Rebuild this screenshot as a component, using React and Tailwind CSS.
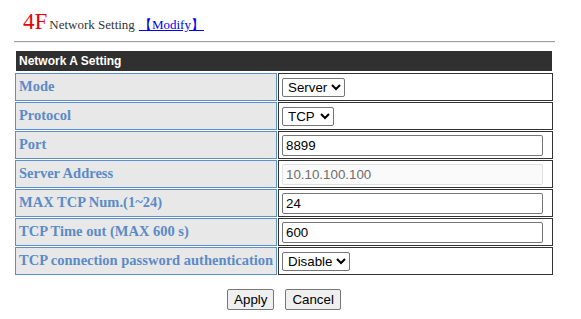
import React, { useState } from "react";

const rows = [
  { label: "Mode", type: "select", value: "Server", options: ["Server", "Client"] },
  { label: "Protocol", type: "select", value: "TCP", options: ["TCP", "UDP"] },
  { label: "Port", type: "input", value: "8899" },
  { label: "Server Address", type: "input", value: "10.10.100.100", disabled: true },
  { label: "MAX TCP Num.(1~24)", type: "input", value: "24" },
  { label: "TCP Time out (MAX 600 s)", type: "input", value: "600" },
  { label: "TCP connection password authentication", type: "select", value: "Disable", options: ["Disable", "Enable"] },
];

const Field = ({ row }) => {
  const [val, setVal] = useState(row.value);
  if (row.type === "select") {
    return (
      <select
        value={val}
        onChange={(e) => setVal(e.target.value)}
        className="h-[19px] border border-[#767676] rounded-[2px] bg-white text-[13.33px] text-black pl-[1px] font-['Liberation_Sans',Arial,sans-serif]"
      >
        {row.options.map((o) => (
          <option key={o}>{o}</option>
        ))}
      </select>
    );
  }
  return (
    <input
      value={val}
      disabled={row.disabled}
      onChange={(e) => setVal(e.target.value)}
      className={
        "w-[261px] h-[21px] border border-[#767676] rounded-[2px] px-[3px] text-[13.33px] font-['Liberation_Sans',Arial,sans-serif] " +
        (row.disabled
          ? "bg-[#fafafa] border-[#e0e0e0] text-[#6d6d6d]"
          : "bg-white text-black")
      }
    />
  );
};

export default function App() {
  return (
    <div className="w-[581px] h-[319px] bg-white font-['Liberation_Serif',serif]">
      <div className="flex items-baseline pl-[23px] pt-[7px] h-[41px]">
        <span className="text-red-600 text-[23px] leading-[30px]">4F</span>
        <span className="text-[#333] text-[13px] ml-[2px]">Network Setting</span>
        <a href="#" className="text-[#0000ee] underline text-[13px] ml-[4px]">
          【Modify】
        </a>
      </div>
      <div className="ml-[14px] w-[541px] border-t border-t-[#a0a0a0] border-b border-b-[#efefef]" />
      <div className="ml-[15px] w-[538px] mt-[8px] flex flex-col gap-[1px]">
        <div className="mx-[1px] h-[20px] bg-[#303030] text-white font-bold text-[12px] font-['Liberation_Sans',Arial,sans-serif] flex items-center pl-[3px] mb-[1px]">
          Network A Setting
        </div>
        {rows.map((row) => (
          <div key={row.label} className="flex gap-[1px] h-[28px]">
            <div className="w-[262px] border border-[#5f8fc9] bg-[#e8e8e8] flex items-center pl-[3px] text-[#5b8bc7] font-bold text-[14.5px] whitespace-nowrap">
              {row.label}
            </div>
            <div className="flex-1 border border-[#333] flex items-center pl-[3px]">
              <Field row={row} />
            </div>
          </div>
        ))}
        <div className="flex justify-center gap-[11px] mt-[13px] font-['Liberation_Sans',Arial,sans-serif]">
          <button className="h-[21px] px-[6px] border border-[#767676] rounded-[2px] bg-[#efefef] text-[13.33px] text-black">
            Apply
          </button>
          <button className="h-[21px] px-[6px] border border-[#767676] rounded-[2px] bg-[#efefef] text-[13.33px] text-black">
            Cancel
          </button>
        </div>
      </div>
    </div>
  );
}
